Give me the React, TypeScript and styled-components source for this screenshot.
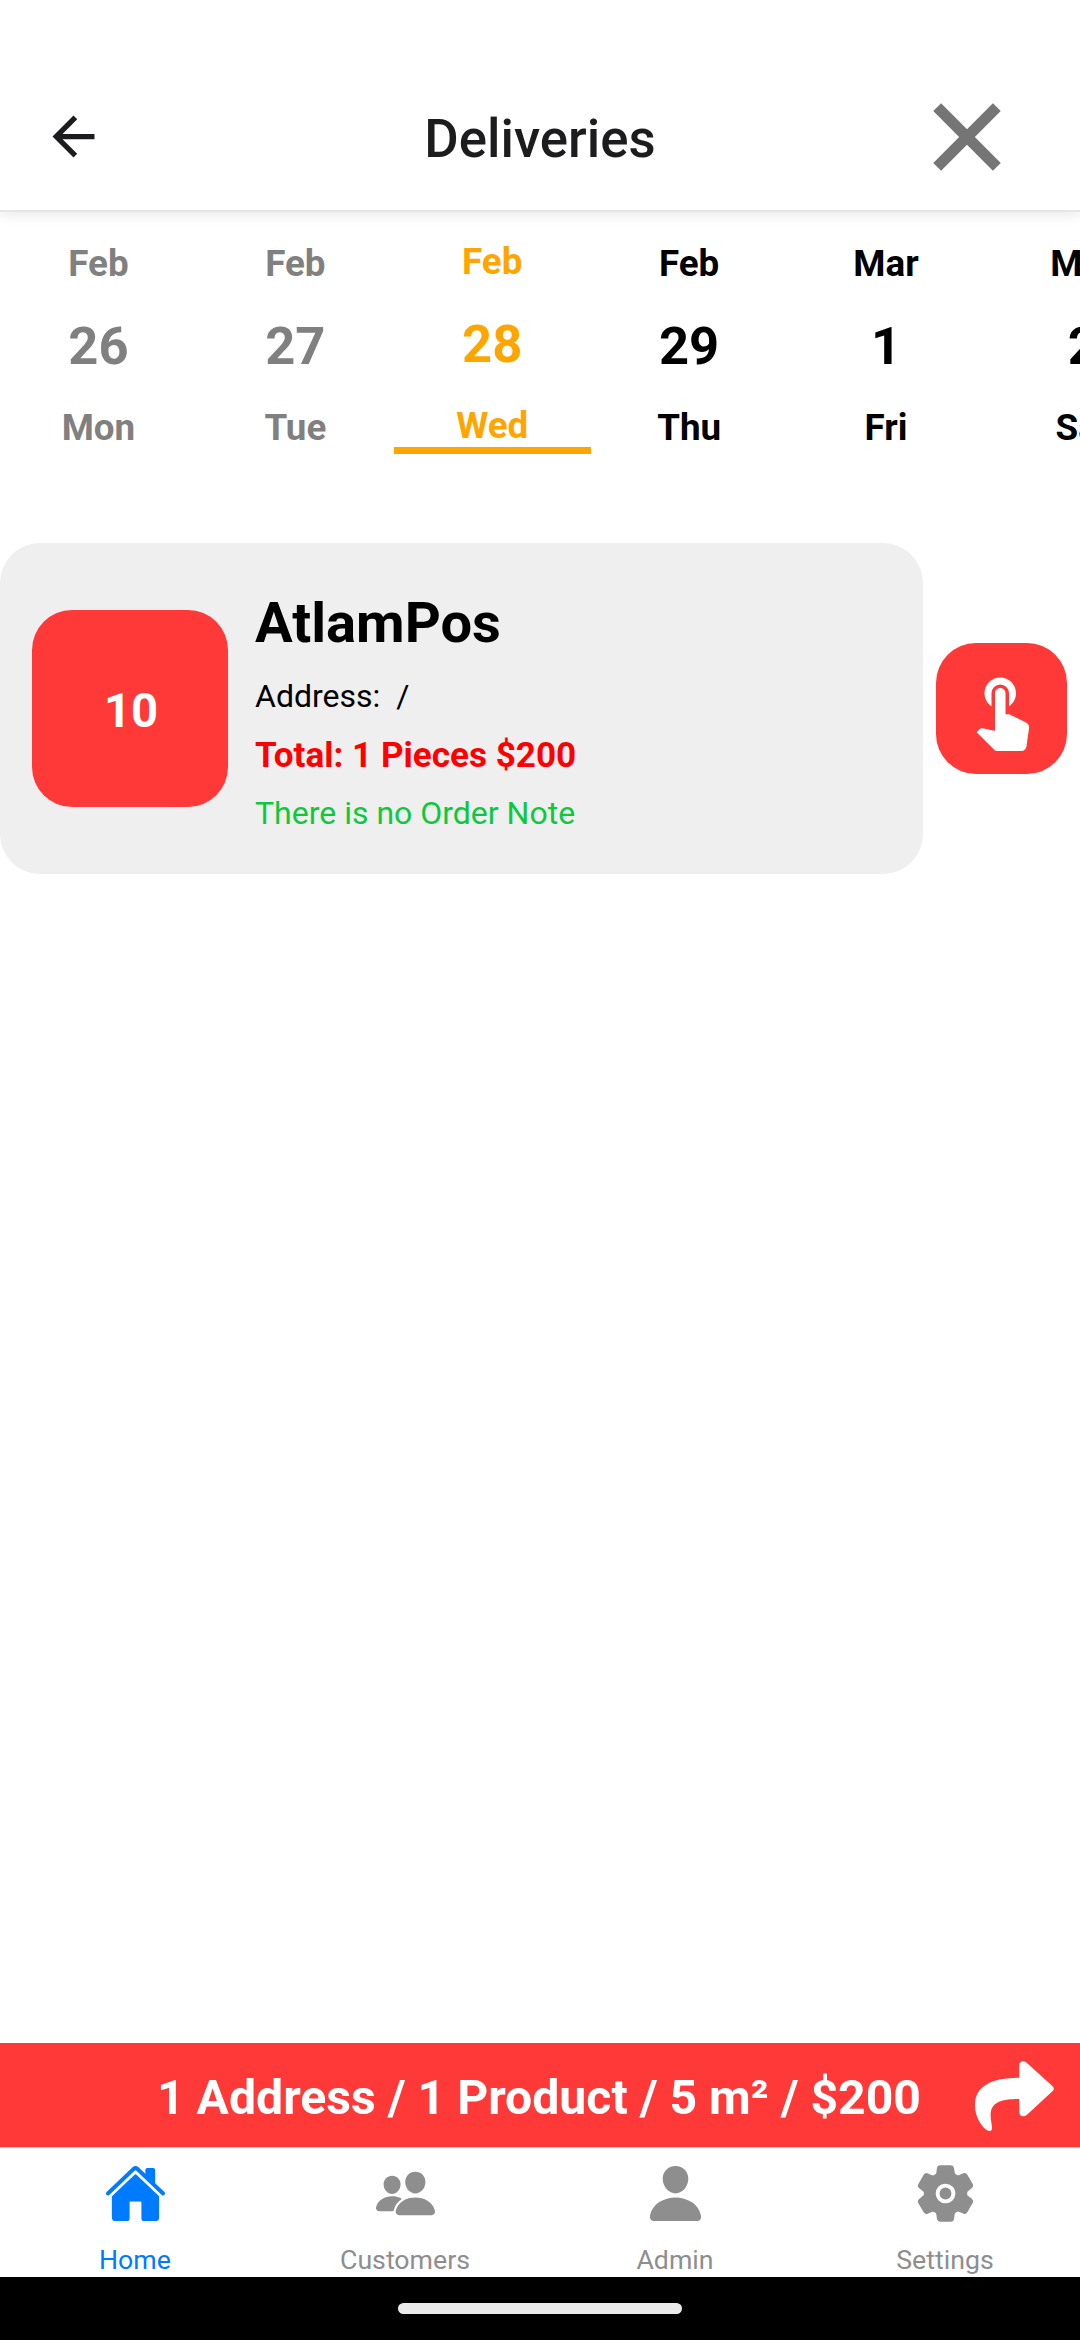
import React from "react";
import styled, { createGlobalStyle } from "styled-components";
import { MdArrowBack, MdTouchApp } from "react-icons/md";
import { IoCloseSharp, IoHome, IoPeople, IoPerson, IoSettings } from "react-icons/io5";

const GlobalStyle = createGlobalStyle`
  *, *::before, *::after { box-sizing: border-box; }
  body { margin: 0; background: #fff; font-family: Roboto, "Noto Sans", sans-serif; }
`;

const Screen = styled.div`
  width: 1080px;
  height: 2340px;
  display: flex;
  flex-direction: column;
  overflow: hidden;
  background: #fff;
`;

const Header = styled.header`
  flex: none;
  height: 210px;
  padding: 63px 53px 0 42px;
  display: grid;
  grid-template-columns: 1fr auto 1fr;
  align-items: center;
  color: #1c1c1e;
  box-shadow: 0 2px 0 #e6e6e6, 0 5px 12px rgba(0, 0, 0, 0.09);
  svg { display: block; }
`;

const HeaderButton = styled.button<{ $end?: boolean }>`
  border: 0;
  padding: 0;
  background: none;
  color: ${(p) => (p.$end ? "#757575" : "#1c1c1e")};
  justify-self: ${(p) => (p.$end ? "end" : "start")};
`;

const Title = styled.h1`
  margin: 0;
  padding: 4px 0 0 11px;
  font-size: 52.8px;
  line-height: 62px;
  font-weight: 500;
`;

const Dates = styled.div`
  flex: none;
  display: flex;
  height: 244px;
  overflow: hidden;
`;

const DateCell = styled.div<{ $tone: string; $active?: boolean }>`
  flex: none;
  width: 196.9px;
  height: 244px;
  padding-top: ${(p) => (p.$active ? 30 : 32)}px;
  border-bottom: ${(p) => (p.$active ? "7px solid #ffa500" : "0")};
  color: ${(p) => p.$tone};
  display: flex;
  flex-direction: column;
  align-items: center;
  font-weight: 700;
`;

const DateLabel = styled.span`
  font-size: 36.75px;
  line-height: 44px;
`;

const DateNumber = styled.span`
  font-size: 52.5px;
  line-height: 62px;
  margin: 29px 0;
`;

const Orders = styled.main`
  flex: 1;
  padding: 89px 13px 0 0;
`;

const OrderRow = styled.div`
  display: flex;
  align-items: center;
  justify-content: space-between;
`;

const Card = styled.article`
  width: 923px;
  height: 331px;
  padding-left: 32px;
  border-radius: 40px;
  background: #efefef;
  display: flex;
  align-items: center;
`;

const Count = styled.div`
  width: 196px;
  height: 197px;
  border-radius: 40px;
  background: #ff3838;
  color: #fff;
  display: flex;
  align-items: center;
  justify-content: center;
  padding: 5px 0 0 2px;
  font-size: 47.25px;
  font-weight: 700;
`;

const Details = styled.div`
  margin-left: 27px;
  padding-top: 5px;
  display: flex;
  flex-direction: column;
`;

const Name = styled.h2`
  margin: 0 0 19px;
  font-size: 56.1px;
  line-height: 68px;
  font-weight: 700;
`;

const Line = styled.p<{ $color: string; $bold?: boolean; $size: number }>`
  margin: 0;
  height: 58.5px;
  line-height: 40px;
  white-space: pre;
  color: ${(p) => p.$color};
  font-size: ${(p) => p.$size}px;
  font-weight: ${(p) => (p.$bold ? 700 : 400)};
  &:last-child { height: 40px; }
`;

const TouchButton = styled.button`
  width: 131px;
  height: 131px;
  border: 0;
  border-radius: 40px;
  padding: 0;
  background: #ff3838;
  color: #fff;
  display: flex;
  align-items: center;
  justify-content: center;
`;

const Summary = styled.div`
  flex: none;
  height: 104px;
  padding: 0 20px 0 157px;
  background: #ff3838;
  color: #fff;
  display: flex;
  align-items: center;
  justify-content: space-between;
  font-size: 48.15px;
  font-weight: 700;
  white-space: nowrap;
`;

const SummaryText = styled.span`
  padding-top: 5px;
`;

const Tabs = styled.nav`
  flex: none;
  height: 130px;
  border-top: 1px solid #d8d8d8;
  display: grid;
  grid-template-columns: repeat(4, 1fr);
`;

const Tab = styled.a<{ $active?: boolean }>`
  display: flex;
  flex-direction: column;
  align-items: center;
  padding-top: 14px;
  color: ${(p) => (p.$active ? "#007aff" : "#8e8e8f")};
  font-size: 26.7px;
  line-height: 32px;
  svg { display: block; margin-bottom: 19px; }
`;

const SystemBar = styled.footer`
  flex: none;
  height: 63px;
  background: #000;
  display: flex;
  justify-content: center;
  align-items: center;
`;

const Handle = styled.div`
  width: 284px;
  height: 11px;
  border-radius: 6px;
  background: #ebebeb;
`;

const GREY = "#808080";
const dates = [
  { month: "Feb", day: "26", week: "Mon", tone: GREY },
  { month: "Feb", day: "27", week: "Tue", tone: GREY },
  { month: "Feb", day: "28", week: "Wed", tone: "#ffa500", active: true },
  { month: "Feb", day: "29", week: "Thu", tone: "#000" },
  { month: "Mar", day: "1", week: "Fri", tone: "#000" },
  { month: "Mar", day: "2", week: "Sat", tone: "#000" },
];

const tabs = [
  { label: "Home", Icon: IoHome, active: true },
  { label: "Customers", Icon: IoPeople },
  { label: "Admin", Icon: IoPerson },
  { label: "Settings", Icon: IoSettings },
];

function ForwardArrow() {
  return (
    <svg width="90" height="90" viewBox="0 0 270 270" fill="currentColor" aria-hidden="true">
      <path d="M148 83V46Q148 34 160 34Q165 34 170 38L248 109Q255 116 248 123L171 194Q166 199 160 199Q148 199 148 187V147C105 147 65 152 62 190C61 208 66 222 66 234Q66 244 57 243C45 241 15 210 15 165C15 105 70 83 148 83Z" />
    </svg>
  );
}

export default function App() {
  return (
    <Screen>
      <GlobalStyle />
      <Header>
        <HeaderButton aria-label="Back"><MdArrowBack size={63} /></HeaderButton>
        <Title>Deliveries</Title>
        <HeaderButton $end aria-label="Close"><IoCloseSharp size={120} /></HeaderButton>
      </Header>
      <Dates>
        {dates.map((d) => (
          <DateCell key={d.day} $tone={d.tone} $active={d.active}>
            <DateLabel>{d.month}</DateLabel>
            <DateNumber>{d.day}</DateNumber>
            <DateLabel>{d.week}</DateLabel>
          </DateCell>
        ))}
      </Dates>
      <Orders>
        <OrderRow>
          <Card>
            <Count>10</Count>
            <Details>
              <Name>AtlamPos</Name>
              <Line $color="#000" $size={32}>{"Address:  /"}</Line>
              <Line $color="#ff0000" $size={35.1} $bold>Total: 1 Pieces $200</Line>
              <Line $color="#0cc93c" $size={32}>There is no Order Note</Line>
            </Details>
          </Card>
          <TouchButton aria-label="Select"><MdTouchApp size={84} /></TouchButton>
        </OrderRow>
      </Orders>
      <Summary>
        <SummaryText>1 Address / 1 Product / 5 m² / $200</SummaryText>
        <ForwardArrow />
      </Summary>
      <Tabs>
        {tabs.map(({ label, Icon, active }) => (
          <Tab key={label} $active={active}>
            <Icon size={63} />
            {label}
          </Tab>
        ))}
      </Tabs>
      <SystemBar><Handle /></SystemBar>
    </Screen>
  );
}
